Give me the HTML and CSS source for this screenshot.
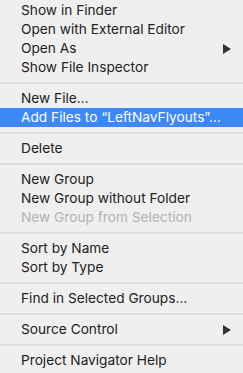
FILE: index.html
```html
<!DOCTYPE html>
<html lang="en">
<head>
    <meta charset="UTF-8">
    <meta name="viewport" content="width=device-width, initial-scale=1.0">
    <title>Context Menu</title>
    <link rel="stylesheet" href="styles.css">
</head>
<body>
    <div class="menu">
        <div class="item">Show in Finder</div>
        <div class="item">Open with External Editor</div>
        <div class="item">Open As<span class="arrow"></span></div>
        <div class="item">Show File Inspector</div>
        <div class="sep"></div>
        <div class="item">New File…</div>
        <div class="item active">Add Files to “LeftNavFlyouts”…</div>
        <div class="sep"></div>
        <div class="item">Delete</div>
        <div class="sep"></div>
        <div class="item">New Group</div>
        <div class="item">New Group without Folder</div>
        <div class="item disabled">New Group from Selection</div>
        <div class="sep"></div>
        <div class="item">Sort by Name</div>
        <div class="item">Sort by Type</div>
        <div class="sep"></div>
        <div class="item">Find in Selected Groups…</div>
        <div class="sep"></div>
        <div class="item">Source Control<span class="arrow"></span></div>
        <div class="sep"></div>
        <div class="item">Project Navigator Help</div>
    </div>
</body>
</html>
```

FILE: styles.css
```css
body {
    margin: 0;
    background-color: #efefef;
    font-family: Inter, "Liberation Sans", Arial, sans-serif;
}

.menu {
    height: 373px;
    padding-top: 1px;
    box-sizing: border-box;
    background-color: #efefef;
    border-radius: 0 0 5px 5px;
}

.item {
    height: 19px;
    line-height: 19px;
    padding-left: 21px;
    padding-right: 12px;
    font-size: 13.7px;
    color: #222;
    display: flex;
    justify-content: space-between;
    align-items: center;
}

.item.active {
    background-color: #3d88f6;
    color: white;
}

.item.disabled {
    color: #b3b3b3;
}

.arrow {
    width: 0;
    height: 0;
    border-top: 5px solid transparent;
    border-bottom: 5px solid transparent;
    border-left: 8px solid #333;
}

.sep {
    height: 2px;
    margin: 5px 0;
    background-color: #dcdcdc;
}
```
